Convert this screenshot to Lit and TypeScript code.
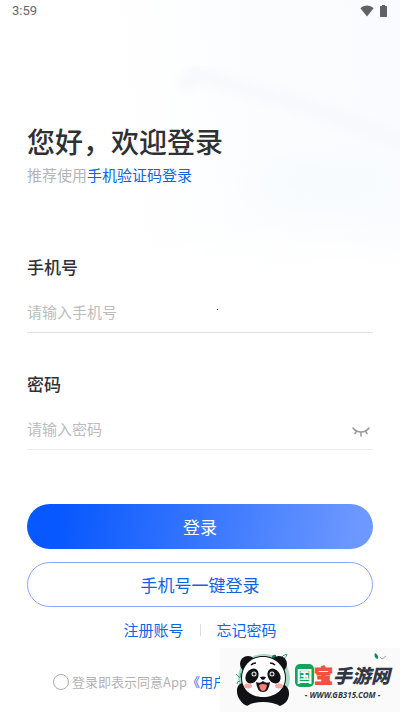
import { LitElement, html, css } from "lit";
import { customElement, state } from "lit/decorators.js";

@customElement("status-bar")
class StatusBar extends LitElement {
  static styles = css`
    :host {
      display: flex;
      align-items: center;
      justify-content: space-between;
      height: 22px;
      padding: 0 13px 0 12px;
      font: 13px/22px Roboto, sans-serif;
      color: #66666a;
    }
    .icons {
      display: flex;
      align-items: center;
      gap: 6px;
    }
    svg {
      display: block;
    }
  `;

  render() {
    return html`
      <span>3:59</span>
      <div class="icons">
        <svg width="14" height="12" viewBox="0 0 14 12" fill="#626264" aria-hidden="true">
          <path d="M7 11.6 .4 3.2C2.300 1.400 4.500.5 7 .5s4.700.9 6.600 2.700z" />
        </svg>
        <svg width="7" height="12" viewBox="0 0 7 12" fill="#626264" aria-hidden="true">
          <path d="M2 0h3v1h1.200q.8 0 .8.8v9.400q0 .8-.8.8H.8Q0 12 0 11.200V1.800Q0 1 .8 1H2z" />
        </svg>
      </div>
    `;
  }
}

@customElement("site-badge")
class SiteBadge extends LitElement {
  static styles = css`
    :host {
      display: flex;
      align-items: center;
      box-sizing: border-box;
      width: 180px;
      height: 64px;
      padding-left: 16px;
      gap: 1px;
      background: #fafafa;
      color: #303846;
      font-family: "Noto Sans CJK SC", sans-serif;
    }
    svg {
      display: block;
      flex: none;
    }
    .words {
      position: relative;
      display: flex;
      flex-direction: column;
      align-items: center;
      gap: 2px;
      padding-top: 4px;
    }
    .name {
      display: flex;
      align-items: center;
      font-size: 19px;
      line-height: 24px;
      font-weight: 900;
    }
    .seal {
      width: 19px;
      height: 23px;
      border-radius: 5px;
      background: #13a45c;
      color: #fff;
      font-size: 16px;
      line-height: 22px;
      font-weight: 700;
      text-align: center;
    }
    .red {
      color: #f4503f;
      -webkit-text-stroke: 1px #f4503f;
    }
    .dark {
      font-weight: 900;
      font-style: italic;
    }
    .site {
      font: italic 700 8px/12px "Noto Sans", sans-serif;
    }
    .leaf {
      position: absolute;
      top: -7px;
      right: 2px;
    }
  `;

  render() {
    return html`
      <svg width="58" height="60" viewBox="0 -4 58 60" aria-hidden="true">
        <ellipse cx="28" cy="24" rx="26" ry="24" fill="#a5dcc3" />
        <path d="M40 1q-5-1-4 5 5 0 4-5z" fill="#177653" />
        <path d="M45 5q1-4 6-5-1 5-6 5M0 20l4 4 1-5M4 27q-3 0-3 3" stroke="#469a75" fill="none" />
        <circle cx="12" cy="10" r="8" fill="#111216" />
        <circle cx="43" cy="10" r="8" fill="#111216" />
        <path d="M8 29C0 28-1 40 4 46q3 5 8 6h32q8-3 9-11c1-10-9-14-13-9L13 38z" fill="#111216" />
        <path d="M11 52q6-4 16-4t17 4l-2 4H13z" fill="#fafafa" />
        <path d="M27 2C13 2 5 12 5 24s9 20 22 20 23-8 23-20S41 2 27 2z" fill="#111216" />
        <path d="M27 3C14 3 6 13 6 24s8 19 21 19 22-8 22-19S40 3 27 3z" fill="#fff" />
        <ellipse cx="16" cy="22" rx="6" ry="8" transform="rotate(32 16 22)" fill="#111216" />
        <ellipse cx="38" cy="22" rx="6" ry="8" transform="rotate(-32 38 22)" fill="#111216" />
        <circle cx="18" cy="20" r="2.500" fill="#eee" />
        <circle cx="36" cy="20" r="2.500" fill="#eee" />
        <circle cx="18" cy="20" r="1.500" fill="#222" />
        <circle cx="36" cy="20" r="1.500" fill="#222" />
        <path d="M15 11q2-2 5-2M34 9q3 0 5 2" stroke="#111216" stroke-width="1.500" fill="none" />
        <path d="M24 23q3-1 6 0-1 3-3 3T24 23z" fill="#111216" />
        <path d="M20 28q4 2 7-1 3 3 7 1-1 10-7 10T20 28z" fill="#17171a" />
        <path d="M23 31q4-2 8 0-1 6-4 6T23 31z" fill="#f47f7c" />
        <ellipse cx="12" cy="32" rx="4" ry="2.500" fill="#f9a9a7" />
        <ellipse cx="43" cy="32" rx="4" ry="2.500" fill="#f9a9a7" />
      </svg>
      <div class="words">
        <div class="name">
          <span class="seal">国</span><span class="red">宝</span><span class="dark">手游网</span>
        </div>
        <div class="site">- WWW.GB315.COM -</div>
        <svg class="leaf" width="16" height="9" viewBox="0 0 16 9" aria-hidden="true">
          <path d="M3 1q4 2 3 6-5-1-3-6z" fill="#218454" />
          <path d="M8 5l2 2 4-3" stroke="#9ba8a2" fill="none" />
        </svg>
      </div>
    `;
  }
}

@customElement("app-root")
class AppRoot extends LitElement {
  @state() private showPassword = false;

  static styles = css`
    :host {
      display: block;
      position: relative;
      min-height: 100vh;
      overflow: hidden;
      background: #fff;
      color: #303033;
      font-family: "Noto Sans CJK SC", sans-serif;
    }
    .backdrop {
      position: absolute;
      top: 0;
      right: 0;
      width: 75%;
      height: 270px;
    }
    .page {
      position: relative;
      padding: 99px 27px 18px;
    }
    h1 {
      margin: 0 0 1px;
      font-size: 28px;
      line-height: 40px;
      font-weight: 500;
    }
    .hint {
      margin: 0;
      font-size: 15px;
      line-height: 26px;
      color: #b5b5b7;
    }
    a {
      color: #0f63e6;
      text-decoration: none;
    }
    form {
      margin-top: 67px;
    }
    .field {
      margin-bottom: 39px;
    }
    .field label {
      display: block;
      font-size: 17px;
      line-height: 24px;
      font-weight: 500;
    }
    .entry {
      position: relative;
      display: flex;
      align-items: center;
      height: 40px;
      margin-top: 13px;
      border-bottom: 1px solid #dedede;
    }
    .entry.faint {
      border-color: #ececee;
    }
    input[type="text"],
    input[type="password"],
    input[type="tel"] {
      flex: 1;
      min-width: 0;
      padding: 0;
      border: 0;
      outline: 0;
      background: none;
      color: inherit;
      font: 15px/24px "Noto Sans CJK SC", sans-serif;
    }
    input::placeholder {
      color: #bcbcbe;
      opacity: 1;
    }
    .speck {
      position: absolute;
      left: 55%;
      top: 17px;
      width: 1px;
      height: 1px;
      background: #222;
    }
    button {
      display: block;
      padding: 0;
      border: 0;
      background: none;
      font: 17px/24px "Noto Sans CJK SC", sans-serif;
      cursor: pointer;
    }
    .eye {
      width: 24px;
      height: 24px;
      padding: 5px 3px 0;
    }
    .eye svg {
      display: block;
    }
    .action {
      box-sizing: border-box;
      width: 100%;
      height: 45px;
      border-radius: 23px;
    }
    .primary {
      margin-top: 54px;
      color: #fff;
      background: linear-gradient(100deg, #0758fe 10%, #6d98ff 95%);
    }
    .outline {
      margin-top: 13px;
      border: 1px solid #8ca6f5;
      color: #0f63e6;
    }
    .links {
      display: flex;
      align-items: center;
      justify-content: center;
      gap: 16px;
      margin-top: 11px;
      font-size: 15px;
      line-height: 24px;
    }
    .divider {
      width: 1px;
      height: 12px;
      background: #dcdcdf;
    }
    .agree {
      display: flex;
      align-items: center;
      margin-top: 28px;
      padding-left: 26px;
      font-size: 13px;
      line-height: 24px;
      color: #b2b2b4;
      white-space: nowrap;
    }
    .agree input {
      appearance: none;
      flex: none;
      box-sizing: border-box;
      width: 16px;
      height: 16px;
      margin: 0 3px 0 0;
      border: 1px solid #adadaf;
      border-radius: 50%;
    }
    .agree input:checked {
      background: #0f63e6;
    }
    status-bar {
      position: relative;
    }
    site-badge {
      position: absolute;
      right: 0;
      bottom: 0;
    }
  `;

  render() {
    return html`
      <svg class="backdrop" viewBox="0 0 300 270" preserveAspectRatio="none" aria-hidden="true">
        <defs>
          <linearGradient id="fade" x1="0" y1="0.1" x2="1" y2="0">
            <stop offset="0" stop-color="#fff" />
            <stop offset="0.6" stop-color="#fbfcfe" />
            <stop offset="1" stop-color="#fafbfe" />
          </linearGradient>
          <linearGradient id="down" x1="0" y1="0" x2="0" y2="1">
            <stop offset="0.8" stop-color="#fff" stop-opacity="0" />
            <stop offset="1" stop-color="#fff" />
          </linearGradient>
          <filter id="soft"><feGaussianBlur stdDeviation="6" /></filter>
          <filter id="haze" x="-50%" y="-50%" width="200%" height="200%"><feGaussianBlur stdDeviation="18" /></filter>
        </defs>
        <rect width="300" height="270" fill="url(#fade)" />
        <path d="M82 88 95 74 200 104 310 145" fill="none" stroke="#f7f8fc" stroke-width="13" filter="url(#soft)" />
        <ellipse cx="225" cy="182" rx="80" ry="26" fill="#f7fbfe" filter="url(#haze)" />
        <rect width="300" height="270" fill="url(#down)" />
      </svg>
      <status-bar></status-bar>
      <main class="page">
        <h1>您好，欢迎登录</h1>
        <p class="hint">推荐使用<a href="#code">手机验证码登录</a></p>
        <form @submit=${(e: Event) => e.preventDefault()}>
          <div class="field">
            <label for="phone">手机号</label>
            <div class="entry">
              <input id="phone" type="tel" placeholder="请输入手机号" />
              <span class="speck"></span>
            </div>
          </div>
          <div class="field">
            <label for="password">密码</label>
            <div class="entry faint">
              <input id="password" type=${this.showPassword ? "text" : "password"} placeholder="请输入密码" />
              <button
                class="eye"
                type="button"
                aria-label="显示密码"
                @click=${() => (this.showPassword = !this.showPassword)}
              >
                <svg width="18" height="12" viewBox="0 0 18 12" fill="none" stroke="#98989a" stroke-width="1.500" stroke-linecap="round">
                  <path d="M1 2q3 4 8 4t8-4M4.500 5 3 7.500M9 6.200V10M13.500 5l1.500 2.500" />
                </svg>
              </button>
            </div>
          </div>
          <button class="action primary" type="submit">登录</button>
          <button class="action outline" type="button">手机号一键登录</button>
        </form>
        <nav class="links">
          <a href="#register">注册账号</a>
          <span class="divider"></span>
          <a href="#forgot">忘记密码</a>
        </nav>
        <div class="agree">
          <input id="agree" type="checkbox" />
          <label for="agree">登录即表示同意App</label>
          <a href="#terms">《用户协议》</a>
        </div>
      </main>
      <site-badge></site-badge>
    `;
  }
}
